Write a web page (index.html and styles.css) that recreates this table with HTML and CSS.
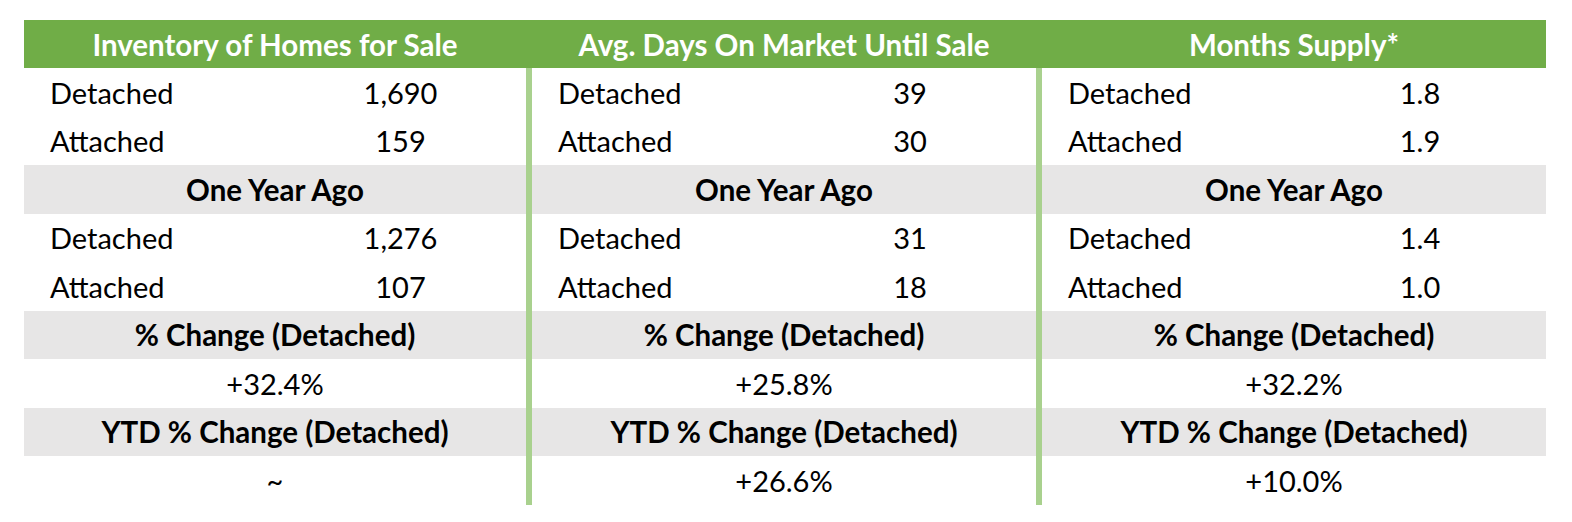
FILE: index.html
```html
<!DOCTYPE html>
<html lang="en">
<head>
<meta charset="utf-8">
<title>Market Stats</title>
<link rel="stylesheet" href="styles.css">
</head>
<body>
<div class="table">
  <div class="head">
    <div class="hcell">Inventory of Homes for Sale</div>
    <div class="hcell sep">Avg. Days On Market Until Sale</div>
    <div class="hcell sep">Months Supply*</div>
  </div>
  <div class="body">
    <div class="col">
      <div class="row"><span class="label">Detached</span><span class="val">1,690</span></div>
      <div class="row"><span class="label">Attached</span><span class="val">159</span></div>
      <div class="row band">One Year Ago</div>
      <div class="row"><span class="label">Detached</span><span class="val">1,276</span></div>
      <div class="row"><span class="label">Attached</span><span class="val">107</span></div>
      <div class="row band">% Change (Detached)</div>
      <div class="row center">+32.4%</div>
      <div class="row band">YTD % Change (Detached)</div>
      <div class="row center">~</div>
    </div>
    <div class="col sep">
      <div class="row"><span class="label">Detached</span><span class="val">39</span></div>
      <div class="row"><span class="label">Attached</span><span class="val">30</span></div>
      <div class="row band">One Year Ago</div>
      <div class="row"><span class="label">Detached</span><span class="val">31</span></div>
      <div class="row"><span class="label">Attached</span><span class="val">18</span></div>
      <div class="row band">% Change (Detached)</div>
      <div class="row center">+25.8%</div>
      <div class="row band">YTD % Change (Detached)</div>
      <div class="row center">+26.6%</div>
    </div>
    <div class="col sep">
      <div class="row"><span class="label">Detached</span><span class="val">1.8</span></div>
      <div class="row"><span class="label">Attached</span><span class="val">1.9</span></div>
      <div class="row band">One Year Ago</div>
      <div class="row"><span class="label">Detached</span><span class="val">1.4</span></div>
      <div class="row"><span class="label">Attached</span><span class="val">1.0</span></div>
      <div class="row band">% Change (Detached)</div>
      <div class="row center">+32.2%</div>
      <div class="row band">YTD % Change (Detached)</div>
      <div class="row center">+10.0%</div>
    </div>
  </div>
</div>
</body>
</html>
```
FILE: styles.css
```css
html, body {
  margin: 0;
  padding: 0;
  background: #ffffff;
}
body {
  font-family: Lato, "Liberation Sans", sans-serif;
  color: #000000;
}
.table {
  width: 1522px;
  margin: 20px 0 0 24px;
}
.head {
  display: flex;
  background: #70ad47;
  height: 48px;
}
.hcell {
  width: 502px;
  display: flex;
  align-items: center;
  justify-content: center;
  color: #ffffff;
  font-weight: 700;
  font-size: 29.5px;
}
.hcell.sep {
  width: 504px;
  padding-left: 6px;
}
.body {
  display: flex;
}
.col {
  width: 502px;
  display: flex;
  flex-direction: column;
}
.col.sep {
  width: 504px;
  border-left: 6px solid #a9d18e;
}
.row {
  height: 48.5px;
  display: flex;
  align-items: center;
  font-size: 29px;
}
.label {
  width: 50%;
  padding-left: 26px;
  box-sizing: border-box;
}
.val {
  width: 50%;
  text-align: center;
}
.band {
  background: #e7e6e6;
  justify-content: center;
  font-weight: 700;
  font-size: 29.5px;
}
.center {
  justify-content: center;
}
```
